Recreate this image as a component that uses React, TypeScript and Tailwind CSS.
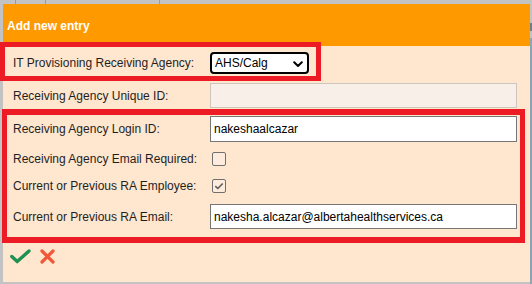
import React from "react";

const font = { fontFamily: '"Liberation Sans", Arial, sans-serif' };

function Chevron() {
  return (
    <svg width="10" height="7" viewBox="0 0 10 7" className="absolute right-[4px] top-[7px]">
      <polyline points="1.2,1.2 5,5 8.8,1.2" fill="none" stroke="#000" strokeWidth="2" strokeLinecap="round" strokeLinejoin="round" />
    </svg>
  );
}

function Checkbox({ checked }: { checked?: boolean }) {
  return (
    <div className="ml-[2px] w-[14px] h-[14px] rounded-[2px] border border-[#707070] bg-[#fdebdc] flex items-center justify-center">
      {checked && (
        <svg width="10" height="8" viewBox="0 0 10 8">
          <polyline points="1.3,4.2 3.8,6.5 8.7,1.5" fill="none" stroke="#5c5c5c" strokeWidth="1.6" strokeLinejoin="round" />
        </svg>
      )}
    </div>
  );
}

function Label({ children }: { children: React.ReactNode }) {
  return <div className="text-[12px] text-[#1f1f1f] leading-[14px]">{children}</div>;
}

export default function App() {
  return (
    <div className="relative w-[532px] h-[284px] bg-[#c3c3c3] overflow-hidden pt-[4px] pl-[3px]" style={font}>
      {/* background sheet hints */}
      <div className="absolute top-0 left-[15px] w-px h-[4px] bg-[#9a9a9a]" />
      <div className="absolute top-0 left-[45px] w-px h-[4px] bg-[#9a9a9a]" />
      <div className="absolute top-0 left-[159px] w-px h-[4px] bg-[#9a9a9a]" />
      <div className="absolute top-[23px] right-0 w-[2px] h-[8px] bg-[#6f7f8a]" />
      <div className="absolute top-[38px] right-0 w-[2px] h-[246px] bg-[#8ea4b2]" />

      <div className="w-[527px] h-[278px] bg-[#fee6cf] flex flex-col">
        <div className="h-[42px] bg-[#ff9900] flex items-center px-[4px] pt-[1px]">
          <span className="text-white font-bold text-[12px]">Add new entry</span>
        </div>

        <div className="pl-[10px] pr-[13px] grid grid-cols-[197px_307px]">
          {/* row 1 */}
          <div className="h-[34px] flex items-center"><Label>IT Provisioning Receiving Agency:</Label></div>
          <div className="h-[34px] flex items-center">
            <div className="relative w-[99px] h-[22px] border-2 border-black rounded-[4px] bg-white flex items-center pl-[3px] text-[12px] text-black">
              AHS/Calg
              <Chevron />
            </div>
          </div>

          {/* row 2 */}
          <div className="h-[31px] flex items-center"><Label>Receiving Agency Unique ID:</Label></div>
          <div className="h-[31px] flex items-center">
            <div className="w-[307px] h-[25px] bg-[#f8efe8] border border-[#cdc6bf]" />
          </div>

          {/* row 3 */}
          <div className="h-[36px] flex items-center"><Label>Receiving Agency Login ID:</Label></div>
          <div className="h-[36px] flex items-center">
            <div className="w-[307px] h-[26px] bg-white border border-[#767676] flex items-center pl-[3px] text-[12px] text-black">
              nakeshaalcazar
            </div>
          </div>

          {/* row 4 */}
          <div className="h-[24px] flex items-center"><Label>Receiving Agency Email Required:</Label></div>
          <div className="h-[24px] flex items-center"><Checkbox /></div>

          {/* row 5 */}
          <div className="h-[30px] flex items-center"><Label>Current or Previous RA Employee:</Label></div>
          <div className="h-[30px] flex items-center"><Checkbox checked /></div>

          {/* row 6 */}
          <div className="h-[31px] flex items-center"><Label>Current or Previous RA Email:</Label></div>
          <div className="h-[31px] flex items-center">
            <div className="w-[307px] h-[25px] bg-white border border-[#767676] flex items-center pl-[3px] text-[12px] text-black">
              nakesha.alcazar@albertahealthservices.ca
            </div>
          </div>
        </div>

        <div className="flex items-center gap-[9px] pl-[7px] pt-[17px]">
          <svg width="21" height="15" viewBox="0 0 21 15">
            <polyline points="1.8,7.5 7.2,12.6 19,2" fill="none" stroke="#1f9153" strokeWidth="3.4" strokeLinecap="round" strokeLinejoin="round" />
          </svg>
          <svg width="15" height="15" viewBox="0 0 15 15">
            <line x1="2" y1="2" x2="13" y2="13" stroke="#f2573a" strokeWidth="3.2" strokeLinecap="round" />
            <line x1="13" y1="2" x2="2" y2="13" stroke="#f2573a" strokeWidth="3.2" strokeLinecap="round" />
          </svg>
        </div>
      </div>

      {/* annotation boxes */}
      <div className="absolute left-0 top-[42px] w-[321px] h-[39px] border-[5px] border-[#ed1c24] pointer-events-none" />
      <div className="absolute left-[2px] top-[109px] w-[523px] h-[134px] border-x-[5px] border-y-[6px] border-[#ed1c24] pointer-events-none" />
    </div>
  );
}
